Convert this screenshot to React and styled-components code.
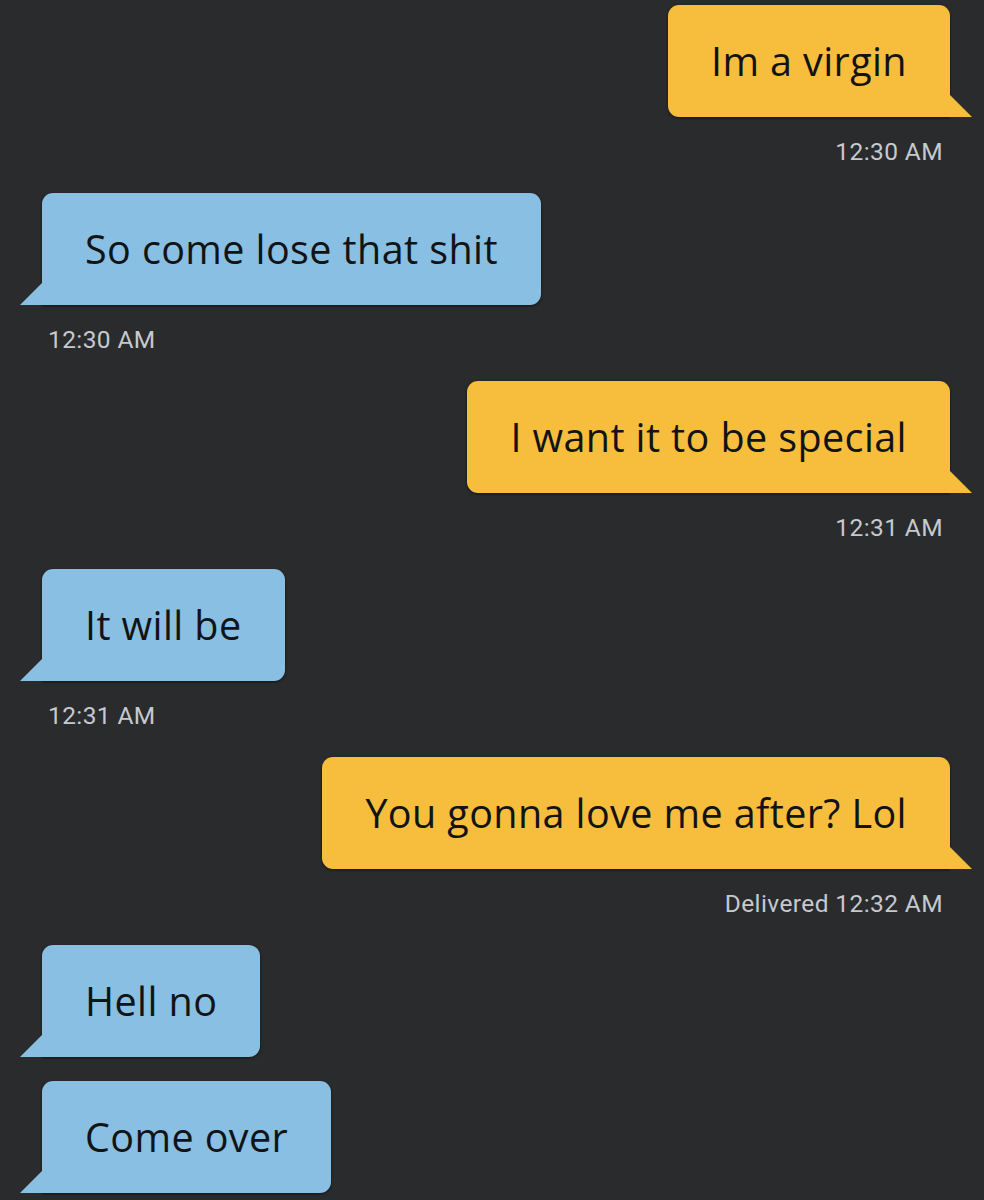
import React from "react";
import styled, { createGlobalStyle, css } from "styled-components";

const Global = createGlobalStyle`
  html, body { margin: 0; padding: 0; background: #2a2b2d; }
  body { font-family: "Open Sans", "Noto Sans", sans-serif; }
`;

const Thread = styled.div`
  display: flex;
  flex-direction: column;
  gap: 24px;
  padding: 5px 34px 40px 42px;
  min-height: 1200px;
  box-sizing: border-box;
  background: #2a2b2d;
`;

const Group = styled.div`
  display: flex;
  flex-direction: column;
  align-items: ${(p) => (p.$out ? "flex-end" : "flex-start")};
`;

const Bubble = styled.div`
  position: relative;
  display: flex;
  align-items: center;
  height: 112px;
  box-sizing: border-box;
  padding: 0 43px;
  border-radius: 11px;
  font-family: "Open Sans", "Noto Sans", sans-serif;
  font-size: 39.5px;
  font-weight: 500;
  letter-spacing: 0.4px;
  color: #121315;
  white-space: nowrap;
  box-shadow: 0 1px 3px rgba(0, 0, 0, 0.55);
  background: ${(p) => (p.$out ? "#f6be3c" : "#88bfe2")};
  ${(p) =>
    p.$out
      ? css`
          border-bottom-right-radius: 0;
          &::after {
            content: "";
            position: absolute;
            right: -22px;
            bottom: 0;
            width: 22px;
            height: 22px;
            background: #f6be3c;
            clip-path: polygon(0 0, 100% 100%, 0 100%);
          }
        `
      : css`
          border-bottom-left-radius: 0;
          &::after {
            content: "";
            position: absolute;
            left: -22px;
            bottom: 0;
            width: 22px;
            height: 22px;
            background: #88bfe2;
            clip-path: polygon(100% 0, 100% 100%, 0 100%);
          }
        `}
`;

const Stamp = styled.div`
  margin: 21px 0 3px;
  padding: 0 7px 0 6px;
  font-family: Roboto, "Liberation Sans", sans-serif;
  font-size: 24.5px;
  letter-spacing: 0.4px;
  line-height: 28px;
  color: #c6c9cd;
`;

const messages = [
  { out: true, text: "Im a virgin", time: "12:30 AM" },
  { out: false, text: "So come lose that shit", time: "12:30 AM" },
  { out: true, text: "I want it to be special", time: "12:31 AM" },
  { out: false, text: "It will be", time: "12:31 AM" },
  { out: true, text: "You gonna love me after? Lol", time: "Delivered 12:32 AM" },
  { out: false, text: "Hell no" },
  { out: false, text: "Come over" },
];

export default function App() {
  return (
    <>
      <Global />
      <Thread>
        {messages.map((m, i) => (
          <Group key={i} $out={m.out}>
            <Bubble $out={m.out}>{m.text}</Bubble>
            {m.time && <Stamp>{m.time}</Stamp>}
          </Group>
        ))}
      </Thread>
    </>
  );
}
